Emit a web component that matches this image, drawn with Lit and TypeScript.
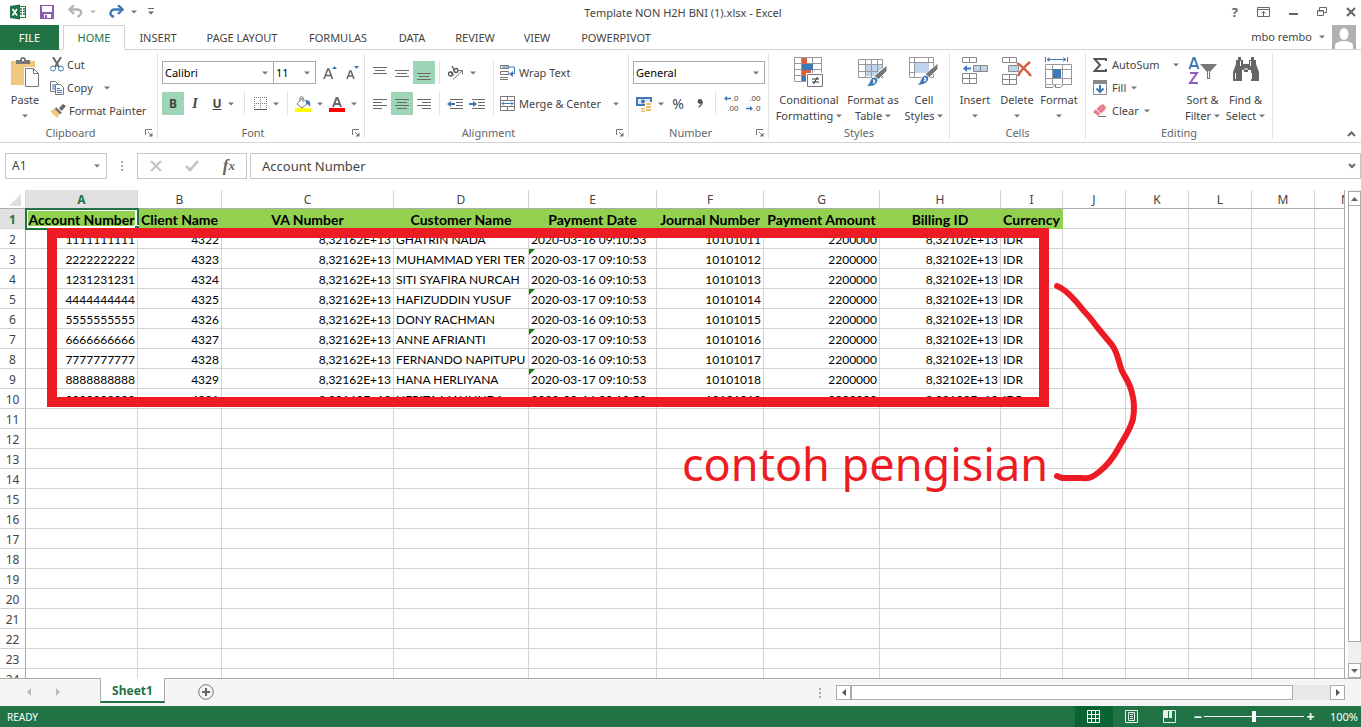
import { LitElement, html, css, svg, nothing } from "lit";
import { customElement } from "lit/decorators.js";
import { classMap } from "lit/directives/class-map.js";

const GREY = "#6a6a6a";
const BLUE = "#3f78b5";

const caret = (color = "#777") => html`
  <svg class="caret" width="6" height="4" viewBox="0 0 6 4" aria-hidden="true">
    <path d="M0 .5h6L3 3.5z" fill=${color} />
  </svg>`;

const launcher = () => html`
  <button class="launcher" aria-label="More options">
    <svg width="8" height="8" viewBox="0 0 8 8" aria-hidden="true">
      <path d="M.5 6V.5H7M3 3l3.500 3.500" fill="none" stroke="#777" />
      <path d="M7.500 3.500v4h-4z" fill="#777" />
    </svg>
  </button>`;

const art = (w: number, h: number, body: unknown) => html`
  <svg width=${w} height=${h} viewBox="0 0 ${w} ${h}" fill="none" aria-hidden="true">${body}</svg>`;

const lines = (rows: [number, number, number][]) =>
  art(14, 14, rows.map(([x, y, w]) => svg`<rect x=${x} y=${y} width=${w} height="1" fill=${GREY} />`));

const icons = {
  excel: art(16, 16, svg`
    <path d="M9 2.500h6.500v11H9" stroke="#217346" fill="#fff" />
    <path d="M10 5h2M13 5h2M10 7.500h2M13 7.500h2M10 10h2M13 10h2" stroke="#217346" stroke-width="1.500" />
    <path d="M0 2 10 .5v15L0 14z" fill="#217346" />
    <path d="m2.500 5 4.500 6.500M7 5l-4.500 6.500" stroke="#fff" stroke-width="1.700" />`),
  save: art(14, 14, svg`
    <path d="M0 0h14v14H0z" fill="#8a5bb0" />
    <path d="M2 1h10v6H2zM4 9h7v4H4z" fill="#fff" /><path d="M5 10h2v3H5z" fill="#8a5bb0" />`),
  undo: art(15, 13, svg`
    <path d="M2 4.500h7.500c3 0 4 2 3.500 4-.4 1.500-2 2.600-3.500 3.500" stroke="#b3b3b3" stroke-width="2.400" />
    <path d="M6 0 1.500 4.500 6 9" stroke="#b3b3b3" stroke-width="2.400" />`),
  redo: art(15, 13, svg`
    <path d="M13 4.500H6c-3 0-4.500 1.500-4.500 4 0 1.500 1.500 2.800 3.500 3.500" stroke=${BLUE} stroke-width="2.400" />
    <path d="M9 0l4.500 4.500L9 9" stroke=${BLUE} stroke-width="2.400" />`),
  customise: art(6, 7, svg`<path d="M0 .5h6" stroke="#666" /><path d="M0 3.500h6L3 6.500z" fill="#666" />`),
  ribbonMode: art(13, 10, svg`
    <path d="M.5.5h12v9H.5zM.5 2.500h12" stroke="#666" /><path d="M6.500 9V4.500M4.500 6.500l2-2 2 2" stroke="#666" />`),
  minimise: art(9, 9, svg`<path d="M0 6h9v2H0z" fill="#666" />`),
  restore: art(10, 9, svg`<path d="M2.500 3V.5h7v5H7" stroke="#666" /><path d="M.5 3.500h6v5h-6zM.5 4h6" stroke="#666" />`),
  close: art(10, 10, svg`<path d="m1 1 8 8M9 1 1 9" stroke="#666" stroke-width="2" />`),
  avatar: art(24, 24, svg`
    <path d="M0 0h24v24H0z" fill="#b1b1b1" />
    <ellipse cx="12" cy="9" rx="4.500" ry="6" fill="#fff" />
    <path d="M3 24v-3c0-3 3-4 6.500-5h5c3.500 1 6.500 2 6.500 5v3z" fill="#fff" />`),
  paste: art(30, 32, svg`
    <path d="M1 4h24v24H1z" fill="#edc87e" />
    <path d="M6 3h4c0-4 6-4 6 0h4v4H6z" fill="#777" /><path d="M12 2h2v2h-2z" fill="#fff" />
    <path d="M14 10h11v19H14z" fill="#fff" />
    <path d="M15.500 11.500h8l5 5v13h-13z" fill="#fff" stroke="#777" /><path d="M23.500 11.500v5h5" stroke="#777" />`),
  cut: art(14, 15, svg`
    <path d="M3 0l6 10M11 0 5 10" stroke="#666" stroke-width="2" />
    <circle cx="3" cy="11.500" r="2.500" stroke=${BLUE} /><circle cx="11" cy="11.500" r="2.500" stroke=${BLUE} />`),
  copy: art(14, 14, svg`
    <path d="M.5.5h5l3 3v7h-8z" fill="#fff" stroke="#777" /><path d="M2 4h3M2 6h3M2 8h3" stroke=${BLUE} />
    <path d="M5.500 3.500h5l3 3v7h-8z" fill="#fff" stroke="#777" /><path d="M7 7.500h3M7 9.500h5M7 11.500h5" stroke=${BLUE} />`),
  painter: art(16, 14, svg`
    <path d="m0 7 5-2.500 5 5L7 14z" fill="#edc87e" /><path d="m6 3 6 6-2 1-5-5zM9 4l4-4 3 2-4.500 5z" fill="#666" />`),
  growFont: art(14, 14, svg`
    <path d="m1 13 3.800-10h1L9.500 13M2.500 9.500H8" stroke="#666" stroke-width="1.600" /><path d="M9 3h5L11.500 0z" fill=${BLUE} />`),
  shrinkFont: art(14, 14, svg`
    <path d="m2 13 3-8h1l3 8M3 10h5" stroke="#666" stroke-width="1.500" /><path d="M9 0h5l-2.500 3z" fill=${BLUE} />`),
  borders: art(13, 13, svg`
    <path d="M.5 0v12M6.500 0v12M12.500 0v12M0 .5h13M0 6.500h13" stroke="#777" stroke-dasharray="1 1" />
    <path d="M0 12.500h13" stroke="#555" />`),
  fill: art(16, 16, svg`
    <path d="M0 12h16v4H0z" fill="#ff0" />
    <path d="m7 2 6 5-6 5-5-4z" fill="#fff" stroke="#777" /><path d="M5 5V2c0-2 3-2 3 0v4" stroke="#777" />
    <path d="M11 4c4 0 5 3 4 7-1-2-2-3-4-3z" fill=${BLUE} />`),
  fontColor: art(16, 16, svg`
    <path d="M0 12h16v4H0z" fill="red" /><path d="m4 11 3.500-9h1L12 11M5 8h6" stroke="#666" stroke-width="2" />`),
  alignTop: lines([[0, 1, 14], [2, 4, 10], [0, 7, 14]]),
  alignMiddle: lines([[0, 4, 14], [2, 7, 10], [0, 10, 14]]),
  alignBottom: lines([[0, 7, 14], [2, 10, 10], [0, 13, 14]]),
  alignLeft: lines([[0, 2, 14], [0, 5, 9], [0, 8, 14], [0, 11, 9]]),
  alignCenter: lines([[0, 2, 14], [2, 5, 10], [0, 8, 14], [2, 11, 10]]),
  alignRight: lines([[0, 2, 14], [5, 5, 9], [0, 8, 14], [5, 11, 9]]),
  orient: art(17, 14, svg`
    <path d="M6 13.500 15 5M11.500 4.500H15.500V8.500" stroke="#777" />
    <circle cx="3.500" cy="8" r="2" stroke="#555" stroke-width="1.300" /><path d="M3.500 5.500l3 3.500" stroke="#555" stroke-width="1.300" />
    <circle cx="9" cy="4.500" r="2" stroke="#555" stroke-width="1.300" /><path d="M5 0l3 5.500" stroke="#555" stroke-width="1.300" />`),
  outdent: art(16, 12, svg`
    <path d="M3 1.500h13M9 4.500h7M9 7.500h7M3 10.500h13" stroke=${GREY} /><path d="M0 6l4-3v2h4v2H4v2z" fill=${BLUE} />`),
  indent: art(16, 12, svg`
    <path d="M3 1.500h13M9 4.500h7M9 7.500h7M3 10.500h13" stroke=${GREY} /><path d="M8 6 4 3v2H0v2h4v2z" fill=${BLUE} />`),
  wrap: art(15, 15, svg`
    <path d="M.5.5h8v3h-8zM.5 6.500h8v3h-8zM0 12.500h8M0 14.500h8" stroke="#777" />
    <path d="M2 2h12.500v6.500H11" stroke=${BLUE} /><path d="m9 9 4-3v6z" fill=${BLUE} />`),
  merge: art(15, 15, svg`
    <path d="M.5.5h14v14H.5zM.5 4.500h14M.5 10.500h14M7.500.5v4M7.500 10.500v4" stroke="#777" />
    <path d="M2 7.500h11M4 5.500l-2 2 2 2M11 5.500l2 2-2 2" stroke=${BLUE} />`),
  currency: art(16, 16, svg`
    <path d="M0 1h16v9H0z" fill=${BLUE} /><path d="M2 3h12v5H2z" fill="#dce8f5" /><circle cx="7" cy="5.500" r="2" fill=${BLUE} />
    <path d="M9 6h7v9H4v-4h5z" fill="#fff" />
    <path d="M10 7h5v2h-5zM10 10h5v2h-5zM10 13h5v2h-5zM5 12h4v1.500H5zM5 14.500h4V16H5z" fill="#e9bd6c" />`),
  comma: art(6, 9, svg`<circle cx="3" cy="2.500" r="2.400" fill="#555" /><path d="M5.300 2.500Q5 6.500 1.500 8" stroke="#555" stroke-width="1.400" />`),
  leftArrow: art(7, 5, svg`<path d="M0 2.500 3 0v1.700h4v1.600H3V5z" fill=${BLUE} />`),
  rightArrow: art(7, 5, svg`<path d="M7 2.500 4 0v1.700H0v1.600h4V5z" fill=${BLUE} />`),
  conditional: art(30, 30, svg`
    <path d="M.5.5h27v24H.5zM.5 6.500h27M.5 12.500h27M.5 18.500h27M7.500.5v24M18.500.5v24" stroke="#999" />
    <path d="M8 1h5v6H8zM8 13h9v6H8z" fill="#d65f3e" /><path d="M8 7h11v6H8zM8 19h4v5H8z" fill=${BLUE} />
    <path d="M12 16h18v14H12z" fill="#fff" />
    <path d="M13.500 17.500h15v12h-15z" fill="#fff" stroke="#777" /><path d="M18 22h7M18 25h7M23.500 20l-4 7" stroke="#333" />`),
  formatTable: art(30, 30, svg`
    <path d="M7 7h17v12H7z" fill="#bfd3ea" />
    <path d="M.5 2.500h24v18H.5zM.5 7.500h24M.5 14.500h24M7.500 2.500v18M13.500 2.500v18M19.500 2.500v18" stroke="#999" />
    <path d="M29 8v6l-9 9-4-4z" fill="#777" stroke="#fff" />
    <path d="M7 29c5 0 4-8 9-9 4 0 5 4 2 7-3 3-7 2.500-11 2z" fill=${BLUE} stroke="#fff" />
    <path d="M15 23c2 0 2 2 0 3" stroke="#fff" stroke-width="1.500" />`),
  cellStyles: art(30, 30, svg`
    <path d="M.5.5h24v20H.5zM.5 5.500h24M.5 15.500h24M5.500.5v20M19.500.5v20" stroke="#999" />
    <path d="M6 6h14v10H6z" fill="#bfd3ea" />
    <path d="M29 6v6l-9 9-4-4z" fill="#777" stroke="#fff" />
    <path d="M7 28c5 0 4-9 9-10 4 0 5 4 2 7-3 3-7 3.500-11 3z" fill=${BLUE} stroke="#fff" />
    <path d="M15 21c2 0 2 2 0 3" stroke="#fff" stroke-width="1.500" />`),
  insertCells: art(26, 30, svg`
    <path d="M.5.5h14v5H.5zM7.500.5v5M.5 16.500h14v10H.5zM.5 21.500h14M7.500 16.500v10" stroke="#888" />
    <path d="M11.500 8.500h14v6h-14z" fill="#bfd3ea" stroke="#888" /><path d="M18.500 8.500v6" stroke="#888" />
    <path d="M1 11.500 5 8v2.500h4v2H5V15z" fill=${BLUE} />`),
  deleteCells: art(30, 30, svg`
    <path d="M.5.5h14v5H.5zM7.500.5v5M.5 17.500h14v10H.5zM.5 22.500h14M7.500 17.500v10" stroke="#888" />
    <path d="M6.500 8.500h10v6h-10z" fill="#bfd3ea" stroke="#888" />
    <path d="M15 6c5 3 9 7 14 13M28 5c-5 4-9 8-12 14" stroke="#d65f3e" stroke-width="2.500" />`),
  formatCells: art(28, 32, svg`
    <path d="M.5 7.500h26v20H.5zM.5 12.500h26M.5 21.500h26M7.500 7.500v20M17.500 7.500v20" stroke="#999" />
    <path d="M8 12h8v9H8z" fill=${BLUE} />
    <path d="M.5 0v5M22.500 0v5M2 2.500h19M5 .5l-3 2 3 2M18 .5l3 2-3 2" stroke=${BLUE} />
    <path d="M.5 28v2.500h7l3-3v3h5l3-3" fill="#fff" stroke="#888" />`),
  sum: art(14, 14, svg`<path d="M13 3V1H1.500L7 7l-5.500 6H13v-2" stroke="#555" stroke-width="2" />`),
  fillDown: art(14, 15, svg`
    <path d="M.5.5h13v14H.5z" stroke="#888" /><path d="M0 0h14v4H0z" fill="#888" />
    <path d="M7 5v7M3.500 8.500 7 12l3.500-3.500" stroke=${BLUE} stroke-width="2" />`),
  eraser: art(14, 13, svg`
    <path d="M7 1.500 10 0l3 3-1 3-7 6-5-4z" fill="#e8808f" /><path d="m3 5 5 5" stroke="#fff" /><path d="M5 12.500h8" stroke="#777" />`),
  sort: art(30, 28, svg`
    <path d="m1.500 12 4-11h1l4 11M3 9h6" stroke=${BLUE} stroke-width="2" />
    <path d="M2 16h7L2 26h8" stroke="#8f5fb8" stroke-width="2" />
    <path d="M12 7h17l-7 8v7h-3v-7z" fill="#777" /><path d="M20.500 14v7" stroke="#fff" />`),
  find: art(26, 26, svg`
    <path d="M5 0h3v3h2v4h6V3h2V0h3v3h2v4l3 8v9h-8V13h-3v2h-4v-2H9v11H0v-9l3-8V3h2z" fill="#666" />
    <path d="M2.500 16v6M18.500 16v6M11 12h4M7.500 4v5M17.500 4v5" stroke="#fff" />`),
  collapse: art(9, 6, svg`<path d="M1 5l3.500-3.500L8 5" stroke="#666" stroke-width="2" />`),
  cancel: art(12, 12, svg`<path d="M1 1l10 10M11 1 1 11" stroke="#c3c3c3" stroke-width="2" />`),
  accept: art(14, 12, svg`<path d="m1 6 4 4 8-9" stroke="#c3c3c3" stroke-width="2.600" />`),
  dots: art(2, 12, svg`<path d="M0 1h2v2H0zM0 5h2v2H0zM0 9h2v2H0z" fill="#aaa" />`),
  chevron: art(8, 6, svg`<path d="m1 1 3 3 3-3" stroke="#666" stroke-width="2" />`),
  plus: art(16, 16, svg`<circle cx="8" cy="8" r="7.300" stroke="#777" /><path d="M8 4v8M4 8h8" stroke="#666" stroke-width="2" />`),
  prev: art(4, 8, svg`<path d="M4 0v8L0 4z" fill="#bbb" />`),
  next: art(4, 8, svg`<path d="M0 0v8l4-4z" fill="#bbb" />`),
  up: art(7, 4, svg`<path d="M0 4h7L3.500 0z" fill="#666" />`),
  down: art(7, 4, svg`<path d="M0 0h7L3.500 4z" fill="#666" />`),
  left: art(4, 7, svg`<path d="M4 0v7L0 3.500z" fill="#555" />`),
  right: art(4, 7, svg`<path d="M0 0v7l4-3.500z" fill="#555" />`),
  corner: art(12, 12, svg`<path d="M12 0v12H0z" fill="#dedede" />`),
  normalView: art(13, 13, svg`<path d="M.5.5h12v12H.5zM.5 4.500h12M.5 8.500h12M4.500.5v12M8.500.5v12" stroke="#fff" />`),
  pageView: art(13, 13, svg`<path d="M.5.5h12v12H.5zM3.500 2.500h6v8h-6zM5 4.500h3M5 6.500h3M5 8.500h3" stroke="#e3efe8" />`),
  breakView: art(13, 13, svg`<path d="M.5.5h12v12H.5z" stroke="#e3efe8" /><path d="M1 1h4v7H1zM6 1h3v7H6z" fill="#e3efe8" />`),
  curve: art(90, 204, svg`
    <path d="M5 5C13 8 24 20 31 29C38 36 42 42 45 46L60 64C66 72 66 80 70 90C74 98 78 102 80 112C83 122 82 132 81 138C78 150 70 160 66 168C60 179 52 187 47 191C41 196 37 198 30 197H10L5 195"
      stroke="#ed1c24" stroke-width="6" stroke-linecap="round" stroke-linejoin="round" />`),
};

const TABS = ["INSERT", "PAGE LAYOUT", "FORMULAS", "DATA", "REVIEW", "VIEW", "POWERPIVOT"];
const COLUMNS = ["A", "B", "C", "D", "E", "F", "G", "H", "I", "J", "K", "L", "M", "N"];
const HEADINGS = [
  "Account Number", "Client Name", "VA Number", "Customer Name", "Payment Date",
  "Journal Number", "Payment Amount", "Billing ID", "Currency",
];
const RECORDS: [string, string, string, string][] = [
  ["1111111111", "4322", "GHATRIN NADA", "16"],
  ["2222222222", "4323", "MUHAMMAD YERI TER", "17"],
  ["1231231231", "4324", "SITI SYAFIRA NURCAH", "16"],
  ["4444444444", "4325", "HAFIZUDDIN YUSUF", "17"],
  ["5555555555", "4326", "DONY RACHMAN", "16"],
  ["6666666666", "4327", "ANNE AFRIANTI", "17"],
  ["7777777777", "4328", "FERNANDO NAPITUPU", "16"],
  ["8888888888", "4329", "HANA HERLIYANA", "17"],
  ["9999999999", "4331", "NERITA MAULINDA", "16"],
];
const ROWS = RECORDS.map(([account, client, name, day], i) => [
  account, client, "8,32162E+13", name, `2020-03-${day} 09:10:53`,
  String(10101011 + i), "2200000", "8,32102E+13", "IDR",
]);

@customElement("app-root")
export class AppRoot extends LitElement {
  static styles = css`
    :host {
      display: flex;
      flex-direction: column;
      height: 100vh;
      overflow: hidden;
      background: #fff;
      color: #444;
      font: 11px/16px "Noto Sans", "Open Sans", sans-serif;
    }
    * { box-sizing: border-box; }
    button, select, input {
      font: inherit;
      color: inherit;
      border: 0;
      border-radius: 0;
      margin: 0;
      padding: 0;
      background: none;
    }
    button { display: inline-flex; align-items: center; justify-content: center; white-space: nowrap; flex: none; }
    svg { display: block; flex: none; }

    .titlebar { display: grid; grid-template-columns: 1fr auto 1fr; align-items: center; height: 25px; padding: 0 5px 2px 10px; }
    .titlebar h1 { font: inherit; margin: 0; padding-top: 2px; }
    .quick { display: flex; align-items: center; gap: 7px; }
    .quick .save { margin: 0 7px; }
    .quick .redo { margin-left: 6px; }
    .quick .custom { margin-left: 4px; }
    .window { display: flex; align-items: center; justify-content: flex-end; gap: 19px; }
    .help { font-weight: 700; font-size: 13px; color: #666; }

    .tabs { display: grid; grid-template-columns: 59px 4px 62px 66px 102px 90px 58px 68px 56px 102px 1fr; height: 25px; flex: none; }
    .tabs > * { border-bottom: 1px solid #d4d4d4; }
    .tabs button { padding-top: 1px; }
    .tabs button.file { background: #217346; color: #fff; border-bottom-color: #217346; }
    .tabs button.home { border: 1px solid #d4d4d4; border-bottom-color: #fff; color: #217346; padding-top: 0; }
    .account { display: flex; justify-content: flex-end; align-items: center; gap: 7px; padding-right: 5px; }

    .ribbon { display: flex; height: 93px; flex: none; border-bottom: 1px solid #d4d4d4; padding: 3px 0; }
    .group { display: grid; grid-template-columns: 100%; grid-template-rows: 71px 16px; border-right: 1px solid #e1e1e1; flex: none; }
    .group footer { display: flex; align-items: center; text-align: center; color: #666; padding-top: 2px; }
    .group footer span { flex: 1; }
    .launcher { width: 16px; }
    .clipboard { width: 158px; }
    .font { width: 207px; }
    .alignment { width: 264px; }
    .number { width: 140px; }
    .styles { width: 181px; }
    .cells { width: 136px; }
    .editing { width: 187px; }
    .body { display: flex; }
    .rows { display: flex; flex-direction: column; gap: 8px; padding: 8px 0 0 4px; }
    .row { display: flex; height: 23px; align-items: center; }
    .stack { display: flex; flex-direction: column; }
    .stack button { height: 23px; justify-content: flex-start; gap: 3px; }
    .stack .spaced .caret { margin-left: 8px; }
    .big { flex-direction: column; justify-content: flex-start; height: 71px; padding-top: 4px; }
    .big .pic { height: 35px; display: flex; align-items: flex-start; justify-content: center; }
    .big .line { display: flex; align-items: center; justify-content: center; gap: 3px; height: 16px; }
    .paste { width: 50px; }
    .tool { width: 22px; height: 23px; }
    .tool.wide { width: 34px; gap: 6px; }
    .tool.on { background: #9fd5b7; }
    .bold { font-weight: 700; font-size: 12px; }
    .italic { font: italic 700 14px "Liberation Serif", serif; }
    .sep { width: 1px; height: 23px; background: #e1e1e1; margin: 0 4px; }
    .sep.tall { height: 54px; margin: 8px 2px 0 5px; }
    .combo { display: grid; height: 23px; border: 1px solid #ababab; align-items: center; }
    .combo > * { grid-area: 1 / 1; }
    .combo select { appearance: none; width: 100%; height: 21px; padding-left: 2px; color: #000; }
    .combo .caret { justify-self: end; margin-right: 5px; pointer-events: none; }
    .face { width: 112px; }
    .size { width: 43px; margin: 0 3px 0 -1px; }
    .format { width: 132px; }
    .text-tool { gap: 4px; height: 23px; justify-content: flex-start; }
    .text-tool .caret { margin-left: 8px; }
    .percent { font-size: 14px; }
    .decimal { display: grid; font: 8px/10px "Liberation Sans", sans-serif; justify-items: end; }
    .decimal span { display: flex; align-items: center; gap: 1px; }
    .w62 { width: 68px; }
    .w60 { width: 60px; }
    .w42 { width: 42px; }
    .styles .body { padding-left: 6px; }
    .cells .body { padding-left: 4px; }
    .editing .body { padding-left: 7px; }
    .editing .stack { width: 88px; }
    .editing .stack button { gap: 5px; }
    .editing .big { width: 43px; }
    .ribbon-end { flex: 1; display: flex; align-items: flex-end; justify-content: flex-end; padding: 0 5px 2px 0; }

    .formulabar { display: flex; height: 47px; flex: none; padding: 10px 0 11px 5px; font-size: 13px; }
    .formulabar > * { border: 1px solid #c6c6c6; display: flex; align-items: center; }
    .name { width: 102px; padding-right: 6px; }
    .name input { flex: 1; min-width: 0; padding-left: 6px; font-size: 12px; }
    .formulabar .grip { width: 30px; justify-content: center; border: 0; }
    .entry { width: 110px; justify-content: space-between; padding: 0 11px 0 12px; }
    .fx { font: italic 700 17px "Liberation Serif", serif; color: #666; }
    .fx small { font-size: 13px; }
    .formula { flex: 1; margin-left: 3px; padding-right: 4px; }
    .formula input { flex: 1; min-width: 0; padding-left: 11px; }

    .sheet { position: relative; flex: 1; min-height: 0; display: flex; }
    .view { flex: 1; min-width: 0; overflow: hidden; border-right: 1px solid #ababab; }
    table { table-layout: fixed; border-collapse: separate; border-spacing: 0; width: 100%; }
    .c0 { width: 26px; } .cA { width: 112px; } .cB { width: 84px; } .cC { width: 172px; } .cD { width: 135px; }
    .cE { width: 128px; } .cF { width: 107px; } .cG { width: 116px; } .cH { width: 121px; } .cI { width: 62px; }
    .cJ, .cK, .cL, .cM { width: 63px; }
    th, td { padding: 2px 2px 0; height: 20px; line-height: 17px; border-right: 1px solid #d4d4d4; border-bottom: 1px solid #d4d4d4; white-space: nowrap; overflow: hidden; font-weight: 400; }
    td { font-family: Lato, sans-serif; font-size: 12px; color: #000; text-align: right; position: relative; }
    td:last-child { border-right: 0; }
    thead th { height: 19px; line-height: 16px; font-size: 12px; border-bottom-color: #ababab; }
    thead th:last-child { text-align: left; padding: 2px 0 0 26px; text-overflow: clip; border-right: 0; }
    thead th.corner { padding: 4px 4px 2px 9px; }
    tbody th { font-size: 12px; padding: 2px 0 0; border-right-color: #ababab; text-align: center; }
    th.sel { background: #e1e1e1; color: #217346; font-weight: 700; }
    td.left { text-align: left; }
    td.heading { background: #92d050; border-color: #92d050; font-weight: 700; font-size: 14px; text-align: center; padding: 2px 0 0; }
    td.flag::before { content: ""; position: absolute; top: 0; left: 0; border: 3px solid transparent; border-top-color: #107c10; border-left-color: #107c10; }
    td.active { outline: 2px solid #217346; outline-offset: -1px; box-shadow: inset 0 0 0 2px #fff; overflow: visible; z-index: 1; }
    td.active::after { content: ""; position: absolute; right: -2px; bottom: -2px; width: 4px; height: 4px; background: #217346; border: solid #fff; border-width: 1px 0 0 1px; }
    .frame { position: absolute; z-index: 2; left: 47px; top: 38px; width: 1002px; height: 179px; border: 10px solid #ed1c24; }
    .note { position: absolute; z-index: 2; left: 682px; top: 244px; margin: 0; font-size: 45px; line-height: 60px; color: #ed1c24; white-space: nowrap; }
    .curve { position: absolute; z-index: 2; left: 1052px; top: 91px; }

    .vscroll { width: 13px; margin-left: 3px; display: flex; flex-direction: column; background: #f0f0f0; padding-top: 1px; }
    .vscroll button { height: 15px; width: 13px; border: 1px solid #ababab; background: #fff; }
    .vscroll .thumb { flex: 437; background: #fff; border: 1px solid #ababab; border-top: 0; }
    .vscroll .rest { flex: 21; }

    .sheetbar { display: flex; height: 28px; flex: none; background: #f5f5f5; border-top: 1px solid #ababab; align-items: flex-start; }
    .nav { width: 100px; display: flex; gap: 25px; padding: 9px 0 0 27px; }
    .tab { width: 65px; height: 25px; margin-top: -1px; padding-top: 3px; background: #fff; border: 1px solid #ababab; border-width: 0 1px; border-bottom: 2px solid #217346; color: #217346; font-weight: 700; font-size: 12px; }
    .add { margin: 5px 0 0 33px; }
    .push { flex: 1; display: flex; justify-content: flex-end; padding: 8px 15px 0 0; }
    .hscroll { display: flex; width: 509px; max-width: 40%; height: 15px; margin: 6px 16px 0 0; background: #e8e8e8; }
    .hscroll button { width: 15px; border: 1px solid #ababab; background: #fff; }
    .hscroll .thumb { flex: 442; background: #fff; border: 1px solid #ababab; }
    .hscroll .rest { flex: 37; }

    .status { display: flex; height: 21px; flex: none; background: #217346; color: #fff; align-items: center; padding: 0 3px 0 7px; }
    .status .ready { flex: 1; font-size: 10px; }
    .status .mode { width: 38px; height: 21px; }
    .status .mode.on { background: #0a6332; }
    .zoom { display: flex; align-items: center; margin-left: 4px; gap: 2px; }
    .zoom button { font-weight: 700; font-size: 14px; width: 9px; }
    .zoom input { appearance: none; width: 100px; height: 11px; background: linear-gradient(#fff, #fff) 0 5px / 100% 1px no-repeat; }
    .zoom input::-webkit-slider-thumb { appearance: none; width: 4px; height: 11px; background: #fff; }
    .percentage { margin-left: 15px; }
  `;

  private group(name: string, label: string, body: unknown, more = true) {
    return html`
      <section class="group ${name}" aria-label=${label}>
        <div class="body">${body}</div>
        <footer><span>${label}</span>${more ? launcher() : nothing}</footer>
      </section>`;
  }

  private big(cls: string, icon: unknown, first: string, second = "") {
    return html`
      <button class="big ${cls}">
        <span class="pic">${icon}</span>
        <span class="line">${first}</span>
        <span class="line">${second} ${caret()}</span>
      </button>`;
  }

  private combo(cls: string, label: string, value: string) {
    return html`
      <div class="combo ${cls}">
        <select aria-label=${label}><option>${value}</option></select>${caret()}
      </div>`;
  }

  private tool(label: string, icon: unknown, cls = "", menu = false) {
    return html`<button class="tool ${cls}" aria-label=${label}>${icon}${menu ? caret() : nothing}</button>`;
  }

  private ribbon() {
    return html`
      <div class="ribbon">
        ${this.group("clipboard", "Clipboard", html`
          ${this.big("paste", icons.paste, "Paste")}
          <div class="stack">
            <button>${icons.cut} Cut</button>
            <button class="spaced">${icons.copy} Copy ${caret()}</button>
            <button>${icons.painter} Format Painter</button>
          </div>`)}
        ${this.group("font", "Font", html`
          <div class="rows">
            <div class="row">
              ${this.combo("face", "Font", "Calibri")}${this.combo("size", "Font size", "11")}
              ${this.tool("Increase font size", icons.growFont)}
              ${this.tool("Decrease font size", icons.shrinkFont)}
            </div>
            <div class="row">
              ${this.tool("Bold", "B", "bold on")}
              ${this.tool("Italic", "I", "italic")}
              ${this.tool("Underline", html`<u>U</u>`, "bold wide", true)}
              <span class="sep"></span>
              ${this.tool("Borders", icons.borders, "wide", true)}
              <span class="sep"></span>
              ${this.tool("Fill colour", icons.fill, "wide", true)}
              ${this.tool("Font colour", icons.fontColor, "wide", true)}
            </div>
          </div>`)}
        ${this.group("alignment", "Alignment", html`
          <div class="rows">
            <div class="row">
              ${this.tool("Top align", icons.alignTop)}
              ${this.tool("Middle align", icons.alignMiddle)}
              ${this.tool("Bottom align", icons.alignBottom, "on")}
              <span class="sep"></span>
              ${this.tool("Orientation", icons.orient, "wide", true)}
            </div>
            <div class="row">
              ${this.tool("Align left", icons.alignLeft)}
              ${this.tool("Center", icons.alignCenter, "on")}
              ${this.tool("Align right", icons.alignRight)}
              <span class="sep"></span>
              ${this.tool("Decrease indent", icons.outdent)}
              ${this.tool("Increase indent", icons.indent)}
            </div>
          </div>
          <span class="sep tall"></span>
          <div class="rows">
            <button class="text-tool">${icons.wrap} Wrap Text</button>
            <button class="text-tool">${icons.merge} Merge &amp; Center ${caret()}</button>
          </div>`)}
        ${this.group("number", "Number", html`
          <div class="rows">
            <div class="row">${this.combo("format", "Number format", "General")}</div>
            <div class="row">
              ${this.tool("Accounting format", icons.currency, "wide", true)}
              ${this.tool("Percent style", "%", "percent")}
              ${this.tool("Comma style", icons.comma)}
              <span class="sep"></span>
              ${this.tool("Increase decimal", html`<span class="decimal"><span>${icons.leftArrow}.0</span><span>.00</span></span>`)}
              ${this.tool("Decrease decimal", html`<span class="decimal"><span>.00</span><span>${icons.rightArrow}.0</span></span>`)}
            </div>
          </div>`)}
        ${this.group("styles", "Styles", html`
          ${this.big("w62", icons.conditional, "Conditional", "Formatting")}
          ${this.big("w60", icons.formatTable, "Format as", "Table")}
          ${this.big("w42", icons.cellStyles, "Cell", "Styles")}`, false)}
        ${this.group("cells", "Cells", html`
          ${this.big("w42", icons.insertCells, "Insert")}
          ${this.big("w42", icons.deleteCells, "Delete")}
          ${this.big("w42", icons.formatCells, "Format")}`, false)}
        ${this.group("editing", "Editing", html`
          <div class="stack">
            <button class="spaced">${icons.sum} AutoSum ${caret()}</button>
            <button>${icons.fillDown} Fill ${caret()}</button>
            <button>${icons.eraser} Clear ${caret()}</button>
          </div>
          ${this.big("", icons.sort, "Sort &", "Filter")}
          ${this.big("", icons.find, "Find &", "Select")}`, false)}
        <div class="ribbon-end"><button aria-label="Collapse the ribbon">${icons.collapse}</button></div>
      </div>`;
  }

  private cell(row: number, col: number) {
    if (row === 1) {
      const text = HEADINGS[col];
      return html`<td class=${classMap({ heading: !!text, active: col === 0 })}>${text ?? ""}</td>`;
    }
    const text = ROWS[row - 2]?.[col] ?? "";
    const cls = { left: [3, 4, 8].includes(col), flag: col === 4 && !!text && row % 2 === 1 };
    return html`<td class=${classMap(cls)}>${text}</td>`;
  }

  private sheet() {
    const numbers = Array.from({ length: 24 }, (_, i) => i + 1);
    return html`
      <main class="sheet">
        <div class="view">
          <table>
            <colgroup><col class="c0" />${COLUMNS.map((c) => html`<col class="c${c}" />`)}</colgroup>
            <thead>
              <tr>
                <th class="corner">${icons.corner}</th>
                ${COLUMNS.map((c) => html`<th scope="col" class=${c === "A" ? "sel" : ""}>${c}</th>`)}
              </tr>
            </thead>
            <tbody>
              ${numbers.map((n) => html`
                <tr><th scope="row" class=${n === 1 ? "sel" : ""}>${n}</th>${COLUMNS.map((_, c) => this.cell(n, c))}</tr>`)}
            </tbody>
          </table>
        </div>
        <div class="vscroll">
          <button aria-label="Scroll up">${icons.up}</button>
          <div class="thumb"></div><div class="rest"></div>
          <button aria-label="Scroll down">${icons.down}</button>
        </div>
        <div class="frame"></div>
        <p class="note">contoh pengisian</p>
        <div class="curve">${icons.curve}</div>
      </main>`;
  }

  render() {
    return html`
      <header class="titlebar">
        <div class="quick">
          ${icons.excel}
          <button class="save" aria-label="Save">${icons.save}</button>
          <button aria-label="Undo">${icons.undo}</button>${caret("#bbb")}
          <button class="redo" aria-label="Redo">${icons.redo}</button>${caret()}
          <button class="custom" aria-label="Customize toolbar">${icons.customise}</button>
        </div>
        <h1>Template NON H2H BNI (1).xlsx - Excel</h1>
        <div class="window">
          <button class="help" aria-label="Help">?</button>
          <button aria-label="Ribbon display options">${icons.ribbonMode}</button>
          <button aria-label="Minimize">${icons.minimise}</button>
          <button aria-label="Restore">${icons.restore}</button>
          <button aria-label="Close">${icons.close}</button>
        </div>
      </header>
      <nav class="tabs">
        <button class="file">FILE</button><span></span><button class="home">HOME</button>
        ${TABS.map((t) => html`<button>${t}</button>`)}
        <div class="account">mbo rembo ${caret()}<span>${icons.avatar}</span></div>
      </nav>
      ${this.ribbon()}
      <div class="formulabar">
        <div class="name"><input aria-label="Name box" value="A1" />${caret()}</div>
        <span class="grip">${icons.dots}</span>
        <div class="entry">
          <button aria-label="Cancel">${icons.cancel}</button>
          <button aria-label="Enter">${icons.accept}</button>
          <button class="fx" aria-label="Insert function">f<small>x</small></button>
        </div>
        <div class="formula">
          <input aria-label="Formula" value="Account Number" />
          <button aria-label="Expand formula bar">${icons.chevron}</button>
        </div>
      </div>
      ${this.sheet()}
      <div class="sheetbar">
        <div class="nav"><button aria-label="Previous sheet">${icons.prev}</button><button aria-label="Next sheet">${icons.next}</button></div>
        <button class="tab">Sheet1</button>
        <button class="add" aria-label="New sheet">${icons.plus}</button>
        <span class="push">${icons.dots}</span>
        <div class="hscroll">
          <button aria-label="Scroll left">${icons.left}</button>
          <div class="thumb"></div><div class="rest"></div>
          <button aria-label="Scroll right">${icons.right}</button>
        </div>
      </div>
      <footer class="status">
        <span class="ready">READY</span>
        <button class="mode on" aria-label="Normal">${icons.normalView}</button>
        <button class="mode" aria-label="Page layout">${icons.pageView}</button>
        <button class="mode" aria-label="Page break preview">${icons.breakView}</button>
        <div class="zoom">
          <button aria-label="Zoom out">−</button>
          <input type="range" aria-label="Zoom" min="0" max="200" value="100" />
          <button aria-label="Zoom in">+</button>
        </div>
        <span class="percentage">100%</span>
      </footer>`;
  }
}
